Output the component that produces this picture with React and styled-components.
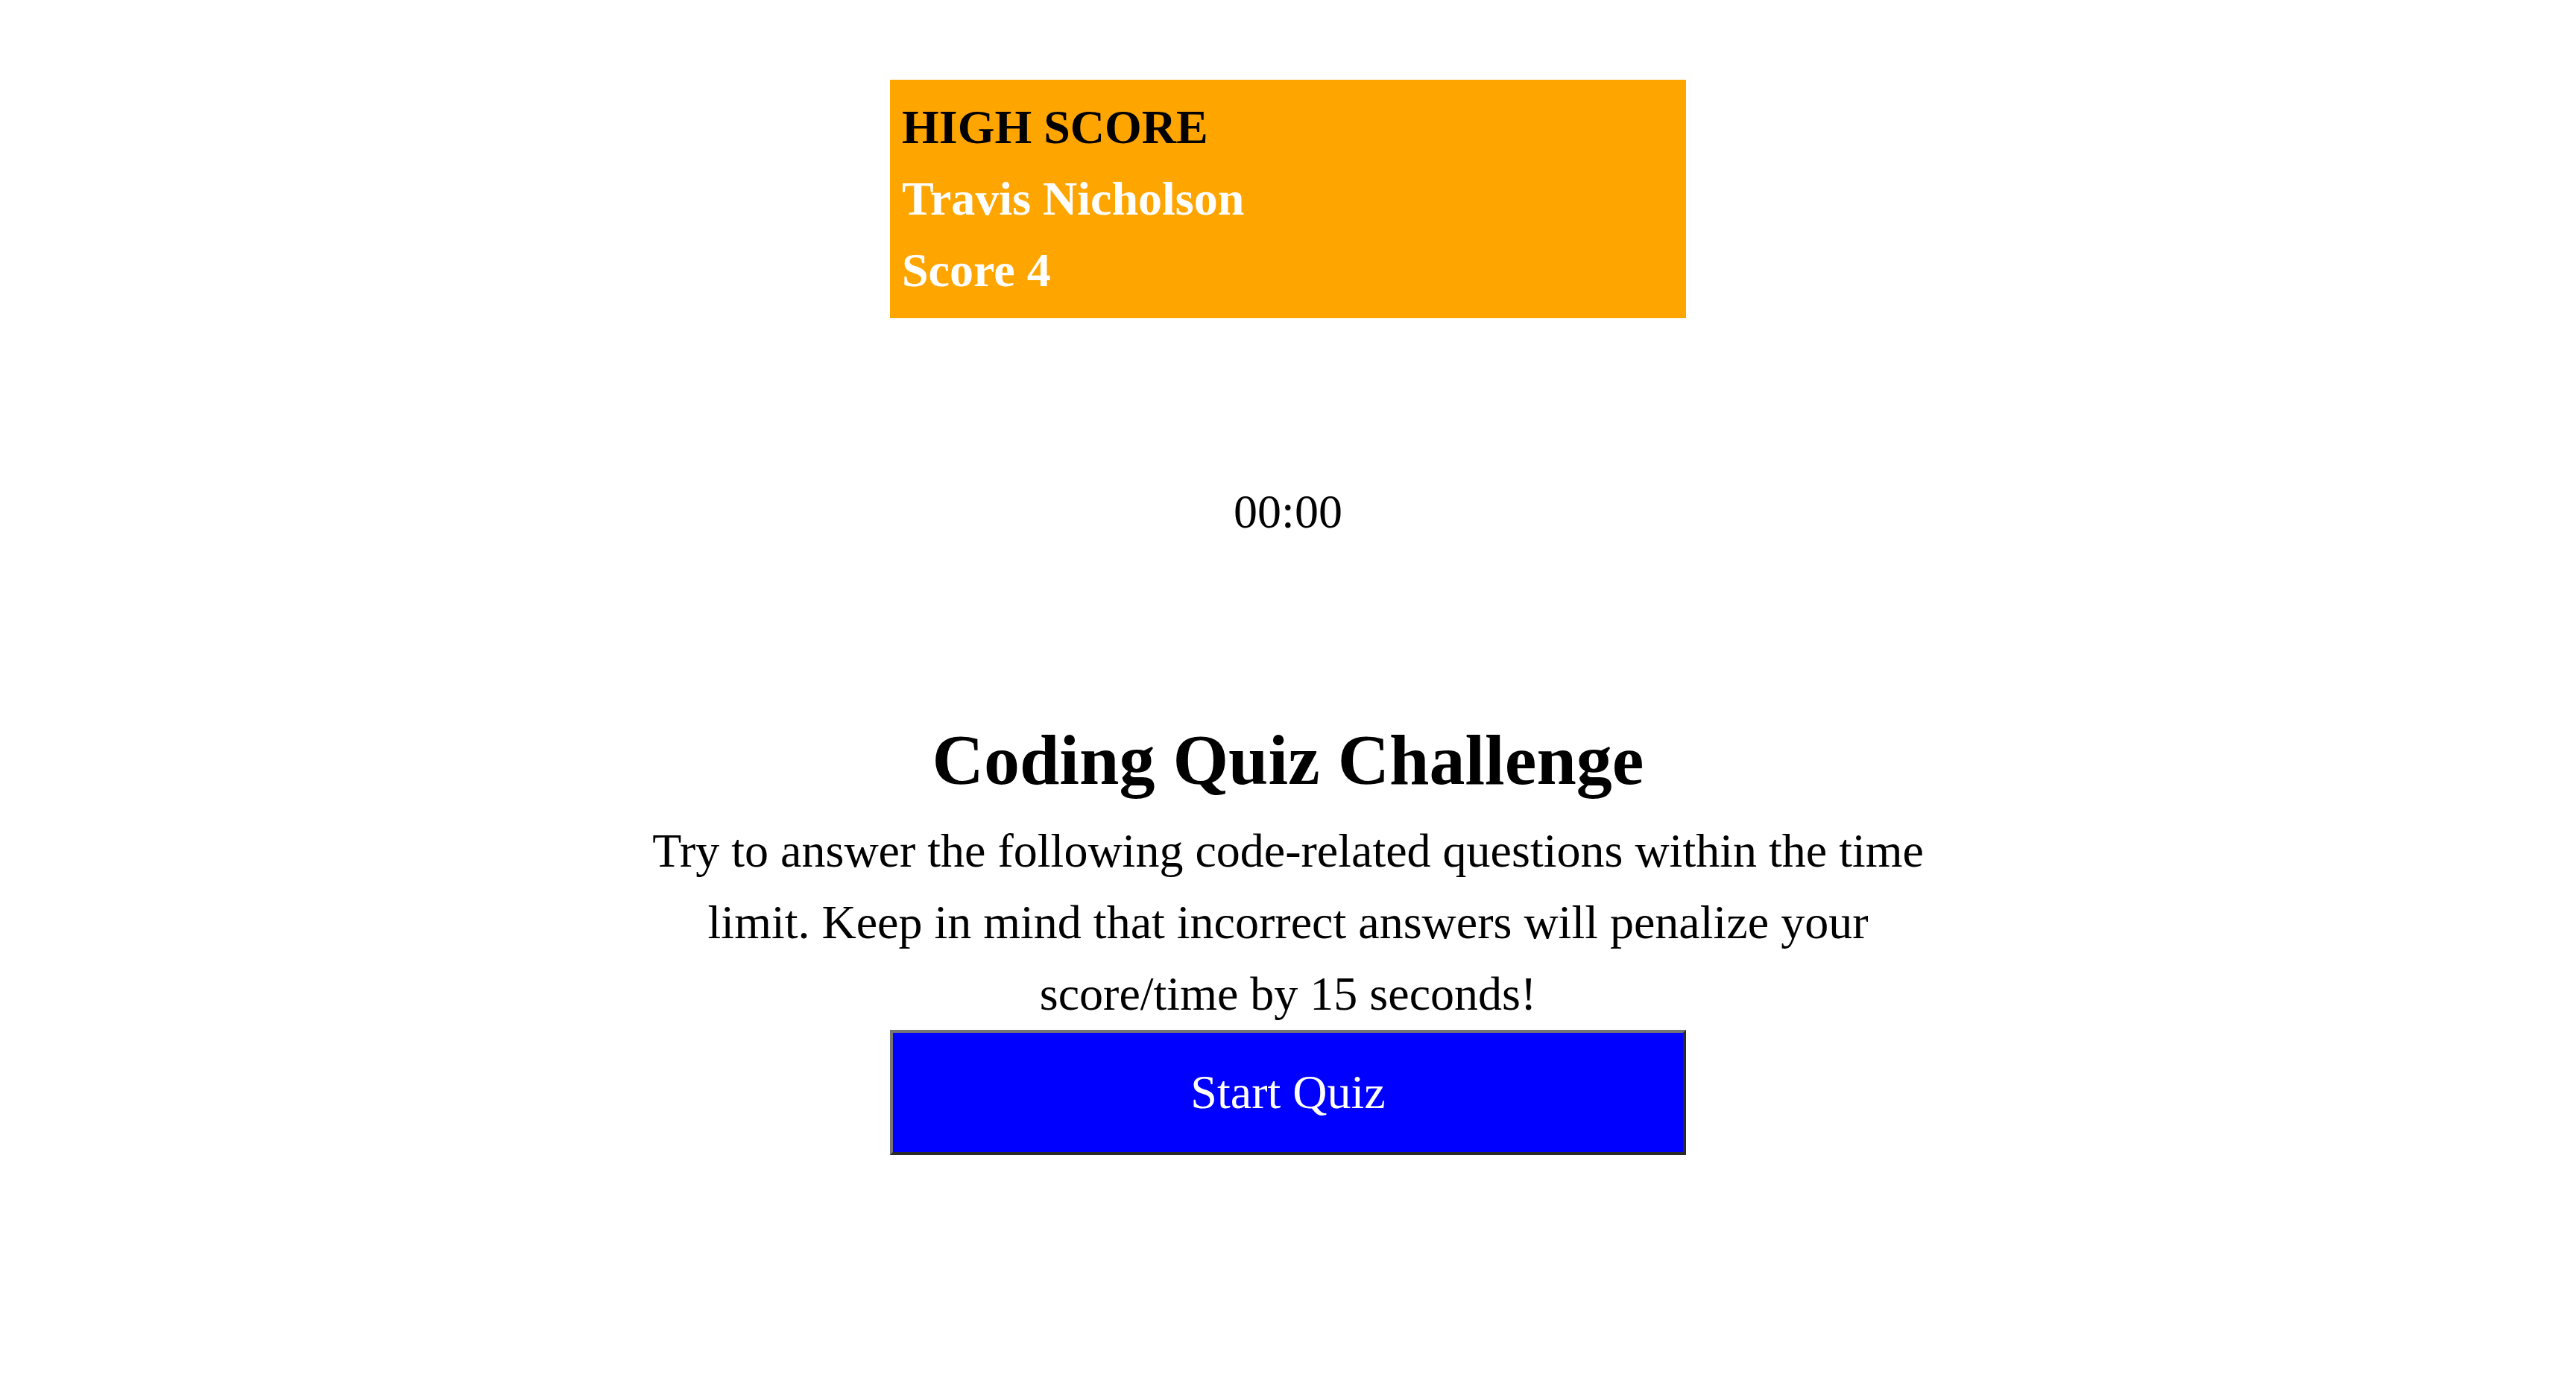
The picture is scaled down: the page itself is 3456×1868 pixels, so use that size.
import React from 'react';
import styled, { createGlobalStyle } from 'styled-components';

const GlobalStyle = createGlobalStyle`
  body {
    margin: 0;
    background: #ffffff;
    font-family: 'Liberation Serif', 'Times New Roman', serif;
    color: #000000;
  }
`;

const Page = styled.main`
  display: flex;
  flex-direction: column;
  align-items: center;
  padding-top: 107px;
`;

const HighScore = styled.section`
  box-sizing: border-box;
  width: 1068px;
  padding: 16px;
  background-color: #ffa500;
  font-size: 64px;
  font-weight: 700;
  line-height: 96px;
`;

const ScoreLine = styled.div`
  color: ${(props) => (props.light ? '#ffffff' : '#000000')};
`;

const Timer = styled.div`
  margin-top: 212px;
  font-size: 64px;
  line-height: 96px;
`;

const Title = styled.h1`
  margin: 230px 0 0;
  font-size: 96px;
  font-weight: 700;
  line-height: 1.15;
  text-align: center;
`;

const Intro = styled.p`
  margin: 19px 0 0;
  max-width: 1760px;
  font-size: 64px;
  line-height: 96px;
  text-align: center;
`;

const StartButton = styled.button`
  box-sizing: border-box;
  width: 1068px;
  height: 168px;
  margin-top: 0;
  background-color: #0000ff;
  color: #ffffff;
  font-family: inherit;
  font-size: 64px;
  border-width: 4px;
  border-style: solid;
  border-color: #767676 #2a2a2a #2a2a2a #767676;
  cursor: pointer;
`;

const App = () => {
  return (
    <>
      <GlobalStyle />
      <Page>
        <HighScore>
          <ScoreLine>HIGH SCORE</ScoreLine>
          <ScoreLine light>Travis Nicholson</ScoreLine>
          <ScoreLine light>Score 4</ScoreLine>
        </HighScore>
        <Timer>00:00</Timer>
        <Title>Coding Quiz Challenge</Title>
        <Intro>
          Try to answer the following code-related questions within the time limit. Keep in
          mind that incorrect answers will penalize your score/time by 15 seconds!
        </Intro>
        <StartButton>Start Quiz</StartButton>
      </Page>
    </>
  );
};

export default App;
